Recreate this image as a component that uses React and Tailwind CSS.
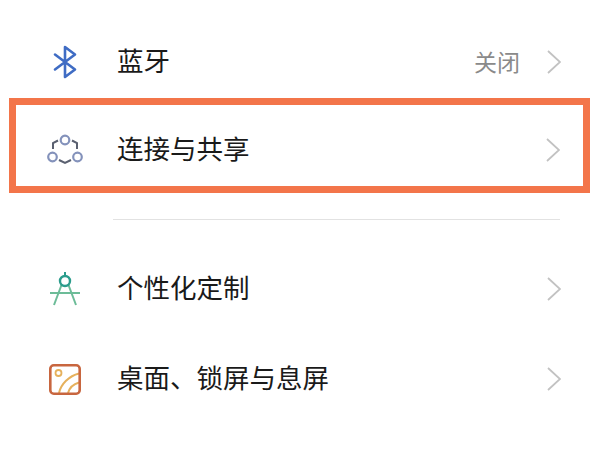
function Chevron() {
  return (
    <svg width="14" height="24" viewBox="0 0 14 24" fill="none" className="shrink-0">
      <path d="M1 1l12 11L1 23" stroke="#c2c2c2" strokeWidth="1.8" />
    </svg>
  );
}

function BluetoothIcon() {
  return (
    <svg width="24" height="34" viewBox="0 0 24 34" fill="none">
      <path d="M2 9.500l20 15L12 32V2l10 7.500L2 24.500" stroke="#3f6cc4" strokeWidth="2.600" strokeLinejoin="round" strokeLinecap="round" />
    </svg>
  );
}

function ShareIcon() {
  return (
    <svg width="36" height="32" viewBox="0 0 36 32" fill="none">
      <circle cx="18" cy="6" r="4.300" stroke="#8492bb" strokeWidth="2.200" />
      <circle cx="5.500" cy="23" r="4.300" stroke="#8492bb" strokeWidth="2.200" />
      <circle cx="30.500" cy="23" r="4.300" stroke="#8492bb" strokeWidth="2.200" />
      <path d="M11 6.500L6 9v6M25 6.500L30 9v6M12 26l6 3 6-3" stroke="#5a6070" strokeWidth="2" />
    </svg>
  );
}

function CompassIcon() {
  return (
    <svg width="32" height="34" viewBox="0 0 32 34" fill="none">
      <path d="M16 0v4" stroke="#2b9c8c" strokeWidth="2" />
      <path d="M12.500 13L5 33M19.500 13L27 33M1 21h30" stroke="#6cbc98" strokeWidth="2" />
      <circle cx="16" cy="9" r="5" stroke="#2b9c8c" strokeWidth="2.400" />
    </svg>
  );
}

function WallpaperIcon() {
  return (
    <svg width="32" height="31" viewBox="0 0 32 31" fill="none">
      <circle cx="9.500" cy="9" r="3" stroke="#e6b15c" strokeWidth="1.800" />
      <path d="M10 29C12 20 20 12 30 9.500M19 29c1.500-5 5.500-9 11-10.500" stroke="#e6b15c" strokeWidth="2" />
      <rect x="1.300" y="1.300" width="29.400" height="28.400" rx="3.500" stroke="#c8663f" strokeWidth="2.600" />
    </svg>
  );
}

function Row({ icon, label, value, className }) {
  return (
    <div className={`flex items-center ${className}`}>
      <div className="w-[36px] flex justify-center shrink-0">{icon}</div>
      <span className="ml-[34px] pb-[3px] text-[26.5px] leading-none font-normal text-[#1a1a1a]">{label}</span>
      <div className="ml-auto flex items-center">
        {value && <span className="mr-[27px] pb-[1px] text-[23px] leading-none text-[#8a8a8a]">{value}</span>}
        <Chevron />
      </div>
    </div>
  );
}

export default function App() {
  return (
    <div className="w-[600px] h-[450px] overflow-hidden bg-white font-['Noto_Sans_CJK_SC','Noto_Sans',sans-serif]">
      <div className="pt-[31px]">
        <Row icon={<BluetoothIcon />} label="蓝牙" value="关闭" className="h-[62px] pl-[47px] pr-[39px]" />
      </div>
      <div className="mt-[5px] ml-[9px] w-[581px] h-[95px] border-[7px] border-[#f3754a]">
        <Row icon={<ShareIcon />} label="连接与共享" className="h-full pt-[8px] pl-[31px] pr-[23px]" />
      </div>
      <div className="mt-[26px] ml-[113px] w-[447px] h-px bg-[#e2e2e2]" />
      <div className="mt-[38px]">
        <Row icon={<CompassIcon />} label="个性化定制" className="h-[62px] pl-[47px] pr-[39px]" />
      </div>
      <div className="mt-[28px]">
        <Row icon={<WallpaperIcon />} label="桌面、锁屏与息屏" className="h-[62px] pl-[47px] pr-[39px]" />
      </div>
    </div>
  );
}
